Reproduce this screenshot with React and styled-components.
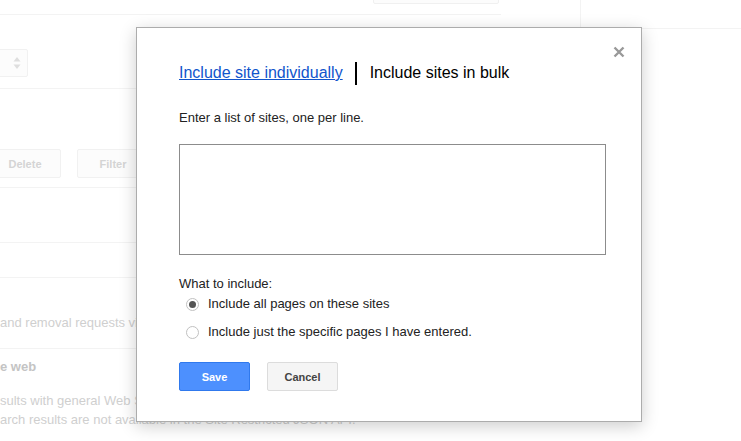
import React from 'react';
import styled, { createGlobalStyle } from 'styled-components';

const GlobalStyle = createGlobalStyle`
  html, body {
    margin: 0;
    padding: 0;
    background: #fff;
    font-family: "Liberation Sans", Arial, sans-serif;
  }
`;

// Background page (faded behind the dialog)
const Page = styled.div`
  position: relative;
  width: 741px;
  height: 441px;
  overflow: hidden;
  display: flex;
`;

const Main = styled.div`
  width: 580px;
  overflow: hidden;
  flex-shrink: 0;
`;

const Inner = styled.div`
  margin-left: -100px;
  width: 680px;
`;

const TopBar = styled.div`
  width: 601px;
  height: 14px;
  border-bottom: 1px solid #f3f3f3;
  display: flex;
`;

const TopButton = styled.div`
  margin-left: 473px;
  margin-top: -23px;
  width: 124px;
  height: 25px;
  border: 1px solid #f0f0f0;
  border-radius: 2px;
  background: #fcfcfc;
`;

const Section = styled.div`
  height: ${p => p.$h}px;
  border-bottom: 1px solid #f3f3f3;
  box-sizing: border-box;
  display: flex;
  flex-direction: column;
  padding-top: ${p => p.$pt || 0}px;
  gap: ${p => p.$gap || 0}px;
`;

const SelectBox = styled.div`
  margin-left: 10px;
  width: 118px;
  height: 28px;
  border: 1px solid #f1f1f1;
  border-radius: 2px;
  background: #fcfcfc;
  display: flex;
  justify-content: flex-end;
  align-items: center;
  padding-right: 6px;
  box-sizing: border-box;
`;

const Toolbar = styled.div`
  display: flex;
  gap: 16px;
  margin-left: 89px;
`;

const GhostButton = styled.div`
  width: 72px;
  height: 29px;
  box-sizing: border-box;
  border: 1px solid #f1f1f1;
  border-radius: 2px;
  background: #fcfcfc;
  color: #d4d4d4;
  font-size: 11px;
  font-weight: bold;
  display: flex;
  align-items: center;
  justify-content: center;
`;

const FadedText = styled.div`
  font-size: 13px;
  line-height: 16px;
  color: ${p => (p.$bold ? '#c4c4c4' : '#cfcfcf')};
  font-weight: ${p => (p.$bold ? 'bold' : 'normal')};
  margin-left: 100px;
  white-space: nowrap;
`;

const TextBlock = styled.div`
  display: flex;
  flex-direction: column;
  gap: 3px;
`;

const Sidebar = styled.div`
  flex: 1;
`;

const SideHead = styled.div`
  height: 28px;
  border-left: 1px solid #f3f3f3;
  border-bottom: 1px solid #f3f3f3;
`;

// Dialog
const Dialog = styled.div`
  position: absolute;
  left: 136px;
  top: 27px;
  width: 506px;
  height: 395px;
  box-sizing: border-box;
  background: #fff;
  border: 1px solid #acacac;
  box-shadow: 0 4px 16px rgba(0, 0, 0, 0.2);
  padding: 33px 42px 0 42px;
  color: #222;
`;

const CloseButton = styled.div`
  position: absolute;
  top: 16px;
  right: 16px;
  width: 12px;
  height: 12px;
  cursor: pointer;
`;

const Tabs = styled.div`
  display: flex;
  align-items: center;
  height: 24px;
  font-size: 16px;
`;

const TabLink = styled.a`
  color: #1155cc;
  text-decoration: underline;
  cursor: pointer;
`;

const TabDivider = styled.span`
  width: 2px;
  height: 23px;
  background: #000;
  margin: 0 13px 0 12px;
`;

const TabCurrent = styled.span`
  color: #000;
`;

const Label = styled.div`
  font-size: 13px;
  line-height: 16px;
  color: #222;
  margin-top: ${p => p.$mt}px;
`;

const TextArea = styled.textarea`
  display: block;
  margin-top: 18px;
  width: 427px;
  height: 111px;
  box-sizing: border-box;
  border: 1px solid #8c8c8c;
  resize: none;
  outline: none;
  font-family: inherit;
`;

const RadioList = styled.div`
  display: flex;
  flex-direction: column;
  gap: 12px;
  margin-top: 4px;
  margin-left: 7px;
`;

const RadioRow = styled.label`
  display: flex;
  align-items: center;
  gap: 9px;
  font-size: 13px;
  line-height: 16px;
  color: #222;
  cursor: pointer;
`;

const RadioDot = styled.span`
  width: 13px;
  height: 13px;
  box-sizing: border-box;
  border-radius: 50%;
  border: 1px solid #c1c1c1;
  background: #fff;
  display: flex;
  align-items: center;
  justify-content: center;

  &::after {
    content: '';
    width: 7px;
    height: 7px;
    border-radius: 50%;
    background: ${p => (p.$checked ? '#555' : 'transparent')};
  }
`;

const Actions = styled.div`
  display: flex;
  gap: 17px;
  margin-top: 22px;
`;

const Button = styled.button`
  width: 71px;
  height: 29px;
  box-sizing: border-box;
  border-radius: 2px;
  font-family: inherit;
  font-size: 11px;
  font-weight: bold;
  cursor: pointer;
  border: 1px solid ${p => (p.$primary ? '#3079ed' : '#dcdcdc')};
  background: ${p => (p.$primary ? '#4d90fe' : '#f5f5f5')};
  color: ${p => (p.$primary ? '#fff' : '#444')};
`;

const App = () => {
  return (
    <>
      <GlobalStyle />
      <Page>
        <Main>
          <Inner>
            <TopBar>
              <TopButton />
            </TopBar>
            <Section $h={74} $pt={34}>
              <SelectBox>
                <svg width="8" height="14" viewBox="0 0 8 14">
                  <path d="M4 1 L7.5 5.5 H0.5 Z" fill="#dedede" />
                  <path d="M4 13 L7.5 8.5 H0.5 Z" fill="#dedede" />
                </svg>
              </SelectBox>
            </Section>
            <Section $h={99} $pt={60}>
              <Toolbar>
                <GhostButton>Delete</GhostButton>
                <GhostButton>Filter</GhostButton>
              </Toolbar>
            </Section>
            <Section $h={55} />
            <Section $h={35} />
            <Section $h={71} $pt={37}>
              <FadedText>and removal requests via Search Console.</FadedText>
            </Section>
            <Section $h={100} $pt={10} $gap={18}>
              <FadedText $bold>e web</FadedText>
              <TextBlock>
                <FadedText>sults with general Web Search for this engine.</FadedText>
                <FadedText>arch results are not available in the Site Restricted JSON API.</FadedText>
              </TextBlock>
            </Section>
          </Inner>
        </Main>
        <Sidebar>
          <SideHead />
        </Sidebar>

        <Dialog>
          <CloseButton>
            <svg width="12" height="12" viewBox="0 0 12 12">
              <path d="M1.5 1.5 L10.5 10.5 M10.5 1.5 L1.5 10.5" stroke="#999" strokeWidth="2.4" />
            </svg>
          </CloseButton>
          <Tabs>
            <TabLink>Include site individually</TabLink>
            <TabDivider />
            <TabCurrent>Include sites in bulk</TabCurrent>
          </Tabs>
          <Label $mt={25}>Enter a list of sites, one per line.</Label>
          <TextArea />
          <Label $mt={21}>What to include:</Label>
          <RadioList>
            <RadioRow>
              <RadioDot $checked />
              Include all pages on these sites
            </RadioRow>
            <RadioRow>
              <RadioDot />
              Include just the specific pages I have entered.
            </RadioRow>
          </RadioList>
          <Actions>
            <Button $primary>Save</Button>
            <Button>Cancel</Button>
          </Actions>
        </Dialog>
      </Page>
    </>
  );
};

export default App;
